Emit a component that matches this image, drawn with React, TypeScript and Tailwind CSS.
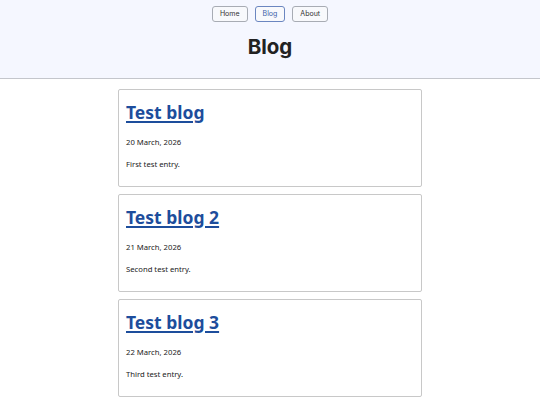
const posts = [
  { title: "Test blog", date: "20 March, 2026", body: "First test entry." },
  { title: "Test blog 2", date: "21 March, 2026", body: "Second test entry." },
  { title: "Test blog 3", date: "22 March, 2026", body: "Third test entry." },
];

export default function App() {
  return (
    <div className="min-h-screen bg-white text-[#222] font-['Noto_Sans',sans-serif]">
      {/* header with nav */}
      <header className="bg-[#f5f7ff] border-b border-[#c4c6cc] h-[79px] flex flex-col items-center pt-[6px] font-['Inter',sans-serif]">
        <nav className="flex gap-[7px]">
          <a className="px-[7px] h-[16px] flex items-center border border-[#a8acb4] rounded-[3px] text-[7px] text-[#333] bg-[#f8f9fc]">
            Home
          </a>
          <a className="px-[7px] h-[16px] flex items-center border border-[#6b86c0] rounded-[3px] text-[7px] text-[#3a5fa8] bg-[#f8f9fc]">
            Blog
          </a>
          <a className="px-[7px] h-[16px] flex items-center border border-[#a8acb4] rounded-[3px] text-[7px] text-[#333] bg-[#f8f9fc]">
            About
          </a>
        </nav>
        <h1 className="mt-[11px] text-[20.5px] font-bold text-[#222] leading-[28px]">Blog</h1>
      </header>

      {/* posts */}
      <main className="w-[304px] mx-auto pt-[10px] flex flex-col gap-[7px]">
        {posts.map((p) => (
          <article key={p.title} className="border border-[#c8c8c8] rounded-[2px] px-[7px] h-[98px]">
            <h2 className="mt-[9px] text-[17.5px] font-bold leading-[26px]">
              <a className="text-[#1d4d9c] underline decoration-[2px] underline-offset-[2px]">{p.title}</a>
            </h2>
            <p className="mt-[12px] text-[7.7px] leading-[10px]">{p.date}</p>
            <p className="mt-[12px] text-[7.7px] leading-[10px]">{p.body}</p>
          </article>
        ))}
      </main>
    </div>
  );
}
